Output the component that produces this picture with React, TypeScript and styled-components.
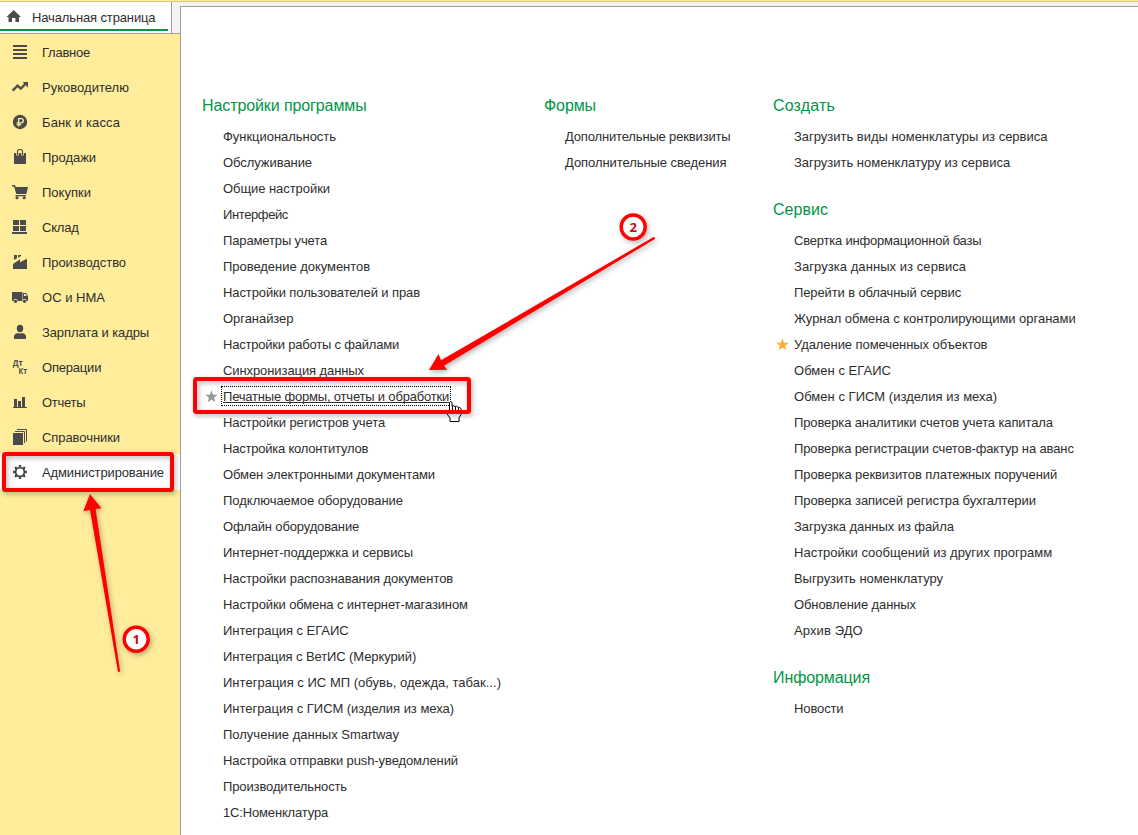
import React from "react";
import styled, { createGlobalStyle } from "styled-components";

const GlobalStyle = createGlobalStyle`
  * { box-sizing: border-box; }
  html, body { margin: 0; padding: 0; background: #fff; }
  body { font-family: "Liberation Sans", Arial, sans-serif; font-size: 13px; color: #2e2e2e; }
`;

const Page = styled.div`
  position: relative;
  width: 1138px;
  height: 835px;
  overflow: hidden;
  display: flex;
  flex-direction: column;
  background: #f5f2f5;
`;
const TopStrip = styled.div`
  height: 2px;
  flex: none;
  background: #ffed9b;
  border-bottom: 1px solid #d8c67c;
`;
const Body = styled.div`
  flex: 1;
  display: flex;
  min-height: 0;
`;
const Left = styled.div`
  width: 180px;
  flex: none;
  display: flex;
  flex-direction: column;
`;
const TabBar = styled.div`
  height: 32px;
  border-bottom: 1px solid #a09fa0;
  display: flex;
`;
const Tab = styled.div`
  width: 172px;
  background: #fff;
  border-right: 1px solid #a09fa0;
  display: flex;
  padding: 6px 0 0 4px;
  position: relative;
  &::after {
    content: "";
    position: absolute;
    left: 0;
    bottom: 2px;
    width: 168px;
    height: 2px;
    background: #009646;
  }
`;
const TabLabel = styled.span`
  padding-left: 8px;
  line-height: 20px;
  white-space: nowrap;
  letter-spacing: -0.13px;
`;
const Sidebar = styled.nav`
  flex: 1;
  background: #ffed9b;
`;
const NavRow = styled.div<{ $active?: boolean }>`
  height: ${(p) => (p.$active ? 36 : 35)}px;
  display: flex;
  padding: 7px 0 0 10px;
  background: ${(p) => (p.$active ? "#fff" : "transparent")};
`;
const NavLabel = styled.span<{ $track: number }>`
  padding-left: 12px;
  line-height: 23px;
  white-space: nowrap;
  letter-spacing: ${(p) => p.$track}px;
`;
const Icon = styled.svg`
  width: 20px;
  height: 20px;
  flex: none;
  display: block;
  color: #4b4b4b;
`;
const Panel = styled.main`
  flex: 1;
  margin-top: 4px;
  background: #fff;
  border-top: 1px solid #a09fa0;
  border-left: 1px solid #a09fa0;
  display: flex;
  padding: 80px 0 0 21px;
`;
const Column = styled.div<{ $width: number }>`
  width: ${(p) => p.$width}px;
  flex: none;
  display: flex;
  flex-direction: column;
  gap: 16px;
`;
const Heading = styled.h2<{ $track: number }>`
  margin: 0;
  height: 36px;
  font-size: 16px;
  font-weight: 400;
  line-height: 37px;
  color: #009646;
  white-space: nowrap;
  letter-spacing: ${(p) => p.$track}px;
`;
const Item = styled.div`
  height: 26px;
  display: flex;
  align-items: center;
`;
const StarSlot = styled.span`
  width: 21px;
  flex: none;
  display: flex;
  padding-left: 3px;
`;
const Link = styled.a<{ $track: number; $focus?: boolean }>`
  margin: 0 -2px;
  padding: 2px 2px 0;
  line-height: 18px;
  white-space: nowrap;
  letter-spacing: ${(p) => p.$track}px;
  outline: ${(p) => (p.$focus ? "1px dotted #000" : "none")};
  outline-offset: -1px;
  text-decoration: ${(p) => (p.$focus ? "underline" : "none")};
  text-decoration-skip-ink: none;
  text-underline-offset: 1px;
`;
const Overlay = styled.svg`
  position: absolute;
  inset: 0;
  width: 1138px;
  height: 835px;
  pointer-events: none;
`;
const BadgeText = styled.text`
  font: 700 13px "Open Sans", "Noto Sans", sans-serif;
  fill: #c80a14;
  text-anchor: middle;
`;

const icons: Record<string, React.ReactNode> = {
  menu: <path d="M3 4h14v2H3zM3 8h14v2H3zM3 12h14v2H3zM3 16h14v2H3z" />,
  trend: (
    <>
      <path d="M2.6 14.6 7.6 9.6 10.8 12.6 15.5 7.8" fill="none" stroke="currentColor" strokeWidth="2.2" />
      <path d="M12.5 6H18v5.5z" />
    </>
  ),
  ruble: (
    <>
      <circle cx="10" cy="11" r="7.2" />
      <path d="M8.6 15.5V7.6h2.6a2.1 2.1 0 0 1 0 4.2H6.6M6.6 13.7h4.6" fill="none" stroke="#ffed9b" strokeWidth="1.3" />
    </>
  ),
  bag: (
    <>
      <path d="M4 7h12v11H4z" />
      <path d="M7.5 9.5V5.6a2.1 2.1 0 0 1 2.1-2.1h.8a2.1 2.1 0 0 1 2.1 2.1v3.9" fill="none" stroke="#ffed9b" strokeWidth="2.6" />
      <path d="M7.5 9.5V5.6a2.1 2.1 0 0 1 2.1-2.1h.8a2.1 2.1 0 0 1 2.1 2.1v3.9" fill="none" stroke="currentColor" strokeWidth="1.1" />
    </>
  ),
  cart: (
    <>
      <path d="M2 4h3l.8 2H18l-1.6 7H6.3L4 5.4H2zM5.5 14H16v1.3H5.5z" />
      <circle cx="7" cy="16.8" r="1.5" />
      <circle cx="14.2" cy="16.8" r="1.5" />
    </>
  ),
  store: <path d="M3 4h6v5H3zM10 4h6v5h-6zM3 10h6v5H3zM10 10h6v5h-6zM2 16h15v2H2z" />,
  factory: <path d="M4 4h3v3.2L4 9zM8 4h3v1L8 6.7zM3 18v-5L10 8.3v3L17 7.7V18z" />,
  truck: (
    <>
      <path d="M2 6h10.5v9H2zM13 7h3l2 3v5h-5z" />
      <path d="M14 8h1.7l1.1 2H14z" fill="#ffed9b" />
      <circle cx="5.5" cy="15.2" r="2.2" fill="#ffed9b" />
      <circle cx="14.5" cy="15.2" r="2.2" fill="#ffed9b" />
      <circle cx="5.5" cy="15.3" r="1.6" />
      <circle cx="14.5" cy="15.3" r="1.6" />
    </>
  ),
  person: (
    <>
      <ellipse cx="10" cy="7.5" rx="3.2" ry="3.7" />
      <path d="M4 18v-2.5c0-2 1.5-3 4-3.5q2 1 4 0c2.5.5 4 1.5 4 3.5V18z" />
    </>
  ),
  dtkt: (
    <g fontFamily='"Open Sans", sans-serif' fontWeight="700" fontSize="8">
      <text x="2.8" y="10" textLength="10" lengthAdjust="spacingAndGlyphs">Дт</text>
      <text x="8.6" y="18" textLength="8.6" lengthAdjust="spacingAndGlyphs">Кт</text>
    </g>
  ),
  chart: <path d="M4 8h3v8H4zM8 10h3v6H8zM12 6h3v10h-3zM3 16h14v1H3z" />,
  books: (
    <>
      <path d="M3 7h10v12H3z" />
      <path d="M5 5.5h9.5V17M7 3.5h9.5V15.5" fill="none" stroke="currentColor" strokeWidth="1" />
    </>
  ),
  gear: (
    <>
      <circle cx="10" cy="11" r="4.4" fill="none" stroke="currentColor" strokeWidth="1.9" />
      {[0, 45, 90, 135, 180, 225, 270, 315].map((a) => (
        <path key={a} d="M8.8 4h2.4v2.5H8.8z" transform={`rotate(${a} 10 11)`} />
      ))}
    </>
  ),
};

const nav: [string, string, number][] = [
  ["menu", "Главное", -0.24],
  ["trend", "Руководителю", 0.02],
  ["ruble", "Банк и касса", 0.12],
  ["bag", "Продажи", -0.04],
  ["cart", "Покупки", 0.01],
  ["store", "Склад", -0.22],
  ["factory", "Производство", -0.06],
  ["truck", "ОС и НМА", 0.02],
  ["person", "Зарплата и кадры", -0.11],
  ["dtkt", "Операции", -0.2],
  ["chart", "Отчеты", -0.28],
  ["books", "Справочники", -0.07],
  ["gear", "Администрирование", -0.12],
];

type Entry = { text: string; track: number; star?: string; focus?: boolean };
type Group = { title: string; track: number; items: Entry[] };

const settings: Group = {
  title: "Настройки программы",
  track: -0.1,
  items: [
    { text: "Функциональность", track: -0.04 },
    { text: "Обслуживание", track: -0.06 },
    { text: "Общие настройки", track: -0.06 },
    { text: "Интерфейс", track: -0.39 },
    { text: "Параметры учета", track: -0.13 },
    { text: "Проведение документов", track: -0.04 },
    { text: "Настройки пользователей и прав", track: -0.1 },
    { text: "Органайзер", track: -0.05 },
    { text: "Настройки работы с файлами", track: -0.21 },
    { text: "Синхронизация данных", track: -0.09 },
    { text: "Печатные формы, отчеты и обработки", track: -0.19, star: "#999", focus: true },
    { text: "Настройки регистров учета", track: -0.09 },
    { text: "Настройка колонтитулов", track: -0.22 },
    { text: "Обмен электронными документами", track: -0.09 },
    { text: "Подключаемое оборудование", track: -0.02 },
    { text: "Офлайн оборудование", track: -0.15 },
    { text: "Интернет-поддержка и сервисы", track: -0.07 },
    { text: "Настройки распознавания документов", track: -0.06 },
    { text: "Настройки обмена с интернет-магазином", track: -0.12 },
    { text: "Интеграция с ЕГАИС", track: -0.05 },
    { text: "Интеграция с ВетИС (Меркурий)", track: -0.1 },
    { text: "Интеграция с ИС МП (обувь, одежда, табак...)", track: 0.02 },
    { text: "Интеграция с ГИСМ (изделия из меха)", track: -0.03 },
    { text: "Получение данных Smartway", track: 0 },
    { text: "Настройка отправки push-уведомлений", track: -0.1 },
    { text: "Производительность", track: -0.12 },
    { text: "1С:Номенклатура", track: -0.16 },
  ],
};
const forms: Group = {
  title: "Формы",
  track: -0.09,
  items: [
    { text: "Дополнительные реквизиты", track: -0.16 },
    { text: "Дополнительные сведения", track: -0.07 },
  ],
};
const create: Group = {
  title: "Создать",
  track: 0.17,
  items: [
    { text: "Загрузить виды номенклатуры из сервиса", track: -0.02 },
    { text: "Загрузить номенклатуру из сервиса", track: -0.01 },
  ],
};
const service: Group = {
  title: "Сервис",
  track: 0.04,
  items: [
    { text: "Свертка информационной базы", track: -0.2 },
    { text: "Загрузка данных из сервиса", track: 0.06 },
    { text: "Перейти в облачный сервис", track: -0.12 },
    { text: "Журнал обмена с контролирующими органами", track: -0.03 },
    { text: "Удаление помеченных объектов", track: -0.07, star: "#ffae35" },
    { text: "Обмен с ЕГАИС", track: 0.03 },
    { text: "Обмен с ГИСМ (изделия из меха)", track: 0.03 },
    { text: "Проверка аналитики счетов учета капитала", track: -0.12 },
    { text: "Проверка регистрации счетов-фактур на аванс", track: -0.12 },
    { text: "Проверка реквизитов платежных поручений", track: -0.08 },
    { text: "Проверка записей регистра бухгалтерии", track: -0.09 },
    { text: "Загрузка данных из файла", track: -0.07 },
    { text: "Настройки сообщений из других программ", track: 0.01 },
    { text: "Выгрузить номенклатуру", track: -0.05 },
    { text: "Обновление данных", track: -0.1 },
    { text: "Архив ЭДО", track: 0.1 },
  ],
};
const info: Group = { title: "Информация", track: -0.1, items: [{ text: "Новости", track: -0.12 }] };

const columns: { width: number; groups: Group[] }[] = [
  { width: 342, groups: [settings] },
  { width: 229, groups: [forms] },
  { width: 340, groups: [create, service, info] },
];

const Star = ({ color }: { color: string }) => (
  <svg width="13" height="13" viewBox="0 0 13 13">
    <path d="M6.5.3 8.1 4.7l4.6.1-3.6 2.9 1.2 4.5-3.8-2.6-3.8 2.6 1.2-4.5L.3 4.8l4.6-.1z" fill={color} />
  </svg>
);

const Section = ({ group }: { group: Group }) => (
  <section>
    <Heading $track={group.track}>{group.title}</Heading>
    {group.items.map((item) => (
      <Item key={item.text}>
        <StarSlot>{item.star && <Star color={item.star} />}</StarSlot>
        <Link $track={item.track} $focus={item.focus}>{item.text}</Link>
      </Item>
    ))}
  </section>
);

const Annotations = () => (
  <Overlay viewBox="0 0 1138 835">
    <defs>
      <filter id="shadow" x="-20%" y="-20%" width="140%" height="140%">
        <feDropShadow dx="1.5" dy="2" stdDeviation="2.5" floodColor="#000" floodOpacity="0.3" />
      </filter>
    </defs>
    <path
      d="M449.5 412V402.500q1-2 2.500 0V406q1.500-1 3 .5 1.500-1 3 .8 1.500-.5 3 1.200v6l-2 3.500v3.500h-9V418l-4-5.500q-.5-2 1.500-2z"
      fill="#fff"
      stroke="#000"
    />
    <path d="M452.5 406v4M455.5 407v3.500M458.5 408v3" fill="none" stroke="#000" />
    <g filter="url(#shadow)">
      <rect x="4" y="454" width="168" height="36" rx="1.5" fill="none" stroke="#f00" strokeWidth="4" />
    </g>
    <g filter="url(#shadow)">
      <rect x="195" y="379" width="274" height="33" rx="1.5" fill="none" stroke="#f00" strokeWidth="4" />
    </g>
    <g filter="url(#shadow)">
      <path d="M90 494 101.500 508.200 95.600 509 120.200 671.500 118 672 90 510 83.300 511.300z" fill="#f00" />
    </g>
    <g filter="url(#shadow)">
      <path d="M429 370 438.500 354 441 360.300 654 236.800 655.300 238.800 444 365.700 447.300 369.700z" fill="#f00" />
    </g>
    <g filter="url(#shadow)">
      <circle cx="136.200" cy="639.200" r="12" fill="#fff" stroke="#f00" strokeWidth="3.400" />
      <circle cx="633.200" cy="227" r="12" fill="#fff" stroke="#f00" strokeWidth="3.400" />
    </g>
    <BadgeText x="136.200" y="644">1</BadgeText>
    <BadgeText x="633.200" y="232">2</BadgeText>
  </Overlay>
);

export default function App() {
  return (
    <>
      <GlobalStyle />
      <Page>
        <TopStrip />
        <Body>
          <Left>
            <TabBar>
              <Tab>
                <Icon viewBox="0 0 20 20" fill="currentColor">
                  <path d="M9.700 2 17 9h-2v5h-3.600v-4H8v4H4.500V9h-2z" />
                </Icon>
                <TabLabel>Начальная страница</TabLabel>
              </Tab>
            </TabBar>
            <Sidebar>
              {nav.map(([icon, label, track], i) => (
                <NavRow key={label} $active={i === nav.length - 1}>
                  <Icon viewBox="0 0 20 20" fill="currentColor">{icons[icon]}</Icon>
                  <NavLabel $track={track}>{label}</NavLabel>
                </NavRow>
              ))}
            </Sidebar>
          </Left>
          <Panel>
            {columns.map((col) => (
              <Column key={col.width} $width={col.width}>
                {col.groups.map((g) => (
                  <Section key={g.title} group={g} />
                ))}
              </Column>
            ))}
          </Panel>
        </Body>
        <Annotations />
      </Page>
    </>
  );
}
